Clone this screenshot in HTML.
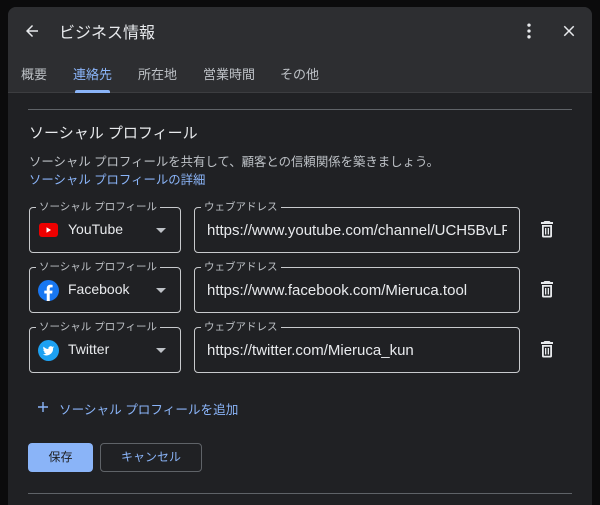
<!DOCTYPE html><html><head><meta charset="utf-8"><style>
*{box-sizing:border-box;margin:0;padding:0}
html,body{width:600px;height:505px;overflow:hidden}
body{background:#0b0b0c;font-family:"Liberation Sans","Noto Sans CJK JP",sans-serif;position:relative;color:#e8eaed}
.panel{position:absolute;left:8px;top:7px;width:584px;height:498px;background:#202124;border-radius:8px 8px 0 0;overflow:hidden}
.head{position:absolute;left:0;top:0;width:584px;height:86px;background:#2d2e31;border-bottom:1px solid #3c3d40}
.abs{position:absolute;white-space:nowrap}
.tab{position:absolute;top:57px;font-size:13px;color:#bdc1c6}
.box{position:absolute;border:1px solid #c8cacd;border-radius:4px;height:46px}
.lbl{position:absolute;top:-8px;left:6px;background:#202124;padding:0 3px;font-size:10.5px;color:#bdc1c6;line-height:14px}
.val{position:absolute;top:13px;font-size:14px;color:#e8eaed}
.url{font-size:15px;top:14px}
.arrow{position:absolute;right:14px;top:20px;width:0;height:0;border-left:5px solid transparent;border-right:5px solid transparent;border-top:5px solid #bdc1c6}
.trash{position:absolute;left:532px}
</style></head><body>
<div class="panel">
<div class="head">
<svg class="abs" style="left:15px;top:15px" width="18" height="18" viewBox="0 0 24 24"><path d="M20 11H7.8l5.6-5.6L12 4l-8 8 8 8 1.4-1.4L7.8 13H20z" fill="#e8eaed"/></svg>
<div class="abs" style="left:51px;top:12px;font-size:16px;color:#e8eaed">ビジネス情報</div>
<svg class="abs" style="left:509px;top:14px" width="24" height="20" viewBox="0 0 24 24"><circle cx="12" cy="5" r="2" fill="#e8eaed"/><circle cx="12" cy="12" r="2" fill="#e8eaed"/><circle cx="12" cy="19" r="2" fill="#e8eaed"/></svg>
<svg class="abs" style="left:552px;top:15px" width="18" height="18" viewBox="0 0 24 24"><path d="M19 6.4L17.6 5 12 10.6 6.4 5 5 6.4 10.6 12 5 17.6 6.4 19 12 13.4 17.6 19 19 17.6 13.4 12z" fill="#e8eaed"/></svg>
<div class="tab" style="left:13px">概要</div>
<div class="tab" style="left:65px;color:#8ab4f8">連絡先</div>
<div class="abs" style="left:67px;top:83px;width:35px;height:3px;background:#8ab4f8;border-radius:2px 2px 0 0"></div>
<div class="tab" style="left:130px">所在地</div>
<div class="tab" style="left:195px">営業時間</div>
<div class="tab" style="left:272px">その他</div>
</div>
<div class="abs" style="left:20px;top:102px;width:544px;height:1px;background:#5f6368"></div>
<div class="abs" style="left:21px;top:115px;font-size:15px">ソーシャル プロフィール</div>
<div class="abs" style="left:21px;top:145px;font-size:12.4px;color:#bdc1c6">ソーシャル プロフィールを共有して、顧客との信頼関係を築きましょう。</div>
<div class="abs" style="left:21px;top:163px;font-size:12.4px;color:#8ab4f8">ソーシャル プロフィールの詳細</div>

<div class="box" style="left:21px;top:200px;width:152px"><div class="lbl">ソーシャル プロフィール</div>
<svg class="abs" style="left:9px;top:15px" width="19" height="14" viewBox="0 0 19 14"><rect width="19" height="14" rx="3" fill="#e00"/><path d="M7.5 4.2v5.6l4.6-2.8z" fill="#fff"/></svg>
<div class="val" style="left:38px">YouTube</div><div class="arrow"></div></div>
<div class="box" style="left:186px;top:200px;width:326px"><div class="lbl">ウェブアドレス</div><div class="val url" style="left:12px;width:300px;overflow:hidden">https://www.youtube.com/channel/UCH5BvLPa</div></div>
<svg class="trash" style="top:213px" width="14" height="18" viewBox="0 0 14 18"><path d="M4.5 1h5l1 1H13v2H1V2h2.5zM2 5h10v11a1.5 1.5 0 0 1-1.5 1.5h-7A1.5 1.5 0 0 1 2 16zm1.8 1.8v8.9h6.4V6.8zM5 8h1.3v6.5H5zm2.7 0H9v6.5H7.7z" fill="#e8eaed" fill-rule="evenodd"/></svg>

<div class="box" style="left:21px;top:260px;width:152px"><div class="lbl">ソーシャル プロフィール</div>
<svg class="abs" style="left:8px;top:12px" width="21" height="21" viewBox="0 0 24 24"><circle cx="12" cy="12" r="12" fill="#1877f2"/><path d="M13.4 24v-8.6h2.8l.4-3.3h-3.2V10c0-.9.3-1.6 1.6-1.6h1.7V5.5c-.3 0-1.3-.1-2.5-.1-2.5 0-4.2 1.5-4.2 4.3v2.4H7.2v3.3H10V24z" fill="#fff"/></svg>
<div class="val" style="left:38px">Facebook</div><div class="arrow"></div></div>
<div class="box" style="left:186px;top:260px;width:326px"><div class="lbl">ウェブアドレス</div><div class="val url" style="left:12px">https://www.facebook.com/Mieruca.tool</div></div>
<svg class="trash" style="top:273px" width="14" height="18" viewBox="0 0 14 18"><path d="M4.5 1h5l1 1H13v2H1V2h2.5zM2 5h10v11a1.5 1.5 0 0 1-1.5 1.5h-7A1.5 1.5 0 0 1 2 16zm1.8 1.8v8.9h6.4V6.8zM5 8h1.3v6.5H5zm2.7 0H9v6.5H7.7z" fill="#e8eaed" fill-rule="evenodd"/></svg>

<div class="box" style="left:21px;top:320px;width:152px"><div class="lbl">ソーシャル プロフィール</div>
<svg class="abs" style="left:8px;top:12px" width="21" height="21" viewBox="0 0 24 24"><circle cx="12" cy="12" r="12" fill="#1da1f2"/><path d="M18.5 8.3c-.5.2-1 .4-1.5.4.6-.3 1-.9 1.2-1.5-.5.3-1.1.5-1.7.7a2.7 2.7 0 0 0-4.6 2.4A7.6 7.6 0 0 1 6.4 7.5a2.7 2.7 0 0 0 .8 3.6c-.4 0-.9-.1-1.2-.3 0 1.3.9 2.4 2.1 2.6-.4.1-.8.1-1.2 0 .3 1.1 1.3 1.9 2.5 1.9A5.4 5.4 0 0 1 5.5 16.4 7.6 7.6 0 0 0 17.2 9.6v-.3c.5-.4.9-.8 1.3-1z" fill="#fff"/></svg>
<div class="val" style="left:38px">Twitter</div><div class="arrow"></div></div>
<div class="box" style="left:186px;top:320px;width:326px"><div class="lbl">ウェブアドレス</div><div class="val url" style="left:12px">https://twitter.com/Mieruca_kun</div></div>
<svg class="trash" style="top:333px" width="14" height="18" viewBox="0 0 14 18"><path d="M4.5 1h5l1 1H13v2H1V2h2.5zM2 5h10v11a1.5 1.5 0 0 1-1.5 1.5h-7A1.5 1.5 0 0 1 2 16zm1.8 1.8v8.9h6.4V6.8zM5 8h1.3v6.5H5zm2.7 0H9v6.5H7.7z" fill="#e8eaed" fill-rule="evenodd"/></svg>

<svg class="abs" style="left:30px;top:395px" width="10" height="10" viewBox="0 0 10 10"><path d="M4.3 0h1.4v4.3H10v1.4H5.7V10H4.3V5.7H0V4.3h4.3z" fill="#8ab4f8"/></svg>
<div class="abs" style="left:51px;top:392px;font-size:12.6px;color:#8ab4f8">ソーシャル プロフィールを追加</div>

<div class="abs" style="left:20px;top:436px;width:65px;height:29px;background:#8ab4f8;border-radius:4px;font-size:12px;color:#202124;text-align:center;line-height:29px">保存</div>
<div class="abs" style="left:92px;top:436px;width:102px;height:29px;border:1px solid #5f6368;border-radius:4px;font-size:12px;color:#8ab4f8;text-align:center;line-height:27px">キャンセル</div>
<div class="abs" style="left:20px;top:486px;width:544px;height:1px;background:#5f6368"></div>
</div>
</body></html>
